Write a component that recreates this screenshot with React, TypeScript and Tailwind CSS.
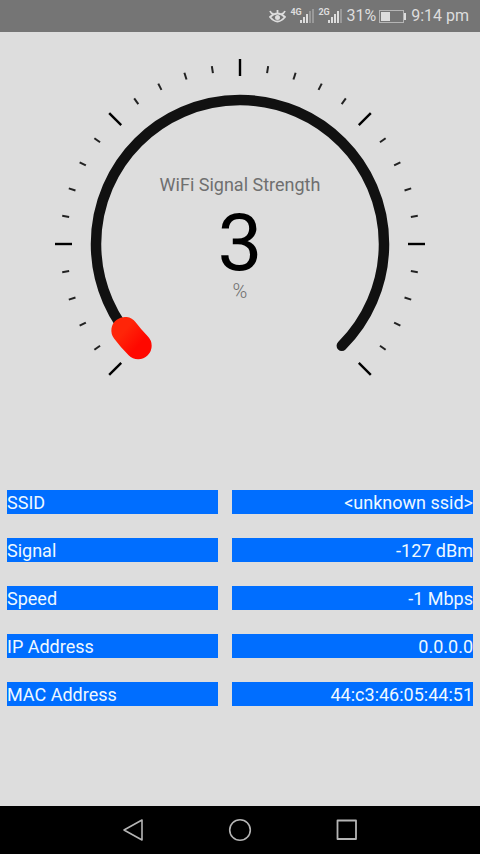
const CENTER = 186;
const RADIUS = 144;
const START = 135;
const SWEEP = 270;
const TICKS = 30;

const network = [
  { label: "SSID", value: "<unknown ssid>" },
  { label: "Signal", value: "-127 dBm" },
  { label: "Speed", value: "-1 Mbps" },
  { label: "IP Address", value: "0.0.0.0" },
  { label: "MAC Address", value: "44:c3:46:05:44:51" },
];

const polar = (degrees: number, radius: number) => {
  const radians = (degrees * Math.PI) / 180;
  return { x: CENTER + radius * Math.cos(radians), y: CENTER + radius * Math.sin(radians) };
};

const arc = (from: number, to: number) => {
  const a = polar(from, RADIUS);
  const b = polar(to, RADIUS);
  return `M${a.x} ${a.y}A${RADIUS} ${RADIUS} 0 ${to - from > 180 ? 1 : 0} 1 ${b.x} ${b.y}`;
};

export default function App() {
  return (
    <div className="flex min-h-screen flex-col bg-[#dddddd] font-[Roboto,sans-serif]">
      <StatusBar />
      <main className="flex grow flex-col">
        <Gauge label="WiFi Signal Strength" value={3} unit="%" />
        <dl className="mt-28 flex flex-col gap-6 px-[7px]">
          {network.map(({ label, value }) => (
            <div className="grid grid-cols-[211fr_241fr] gap-[14px] text-lg/[22px] text-[#eef8ff]" key={label}>
              <dt className="bg-[#006eff] pt-[2px]">{label}</dt>
              <dd className="bg-[#006eff] pt-[2px] text-right">{value}</dd>
            </div>
          ))}
        </dl>
      </main>
      <NavigationBar />
    </div>
  );
}

const StatusBar = () => (
  <header className="flex h-8 items-center justify-end bg-[#757575] pr-[11px] text-base text-[#dddddd]">
    <svg className="mr-1 h-4 w-[17px]" viewBox="0 0 17 16" fill="none" stroke="currentColor" strokeWidth="1.8" aria-hidden="true">
      <path d="M1 9Q8.500 2 16 9Q8.500 18 1 9ZM1 3Q2 5.500 4.500 6M16 3Q15 5.500 12.500 6M8.500 2V5" />
      <circle cx="8.500" cy="9.500" r="2.500" fill="currentColor" stroke="none" />
    </svg>
    <Signal network="4G" bars={3} />
    <Signal network="2G" bars={4} />
    <span className="mr-[3px]">31%</span>
    <svg className="mr-[5px] h-[13px] w-[27px]" viewBox="0 0 27 13" aria-hidden="true">
      <rect x=".5" y=".5" width="24" height="12" fill="none" stroke="#b5b5b5" />
      <path d="M2 2H11V11H2ZM25 3H27V10H25Z" fill="#dddddd" />
    </svg>
    <time>9:14 pm</time>
  </header>
);

const Signal = ({ network, bars }: { network: string; bars: number }) => (
  <span className="mr-[3px] flex w-[25px] items-start">
    <span className="w-[10px] font-['Liberation_Sans_Narrow',Roboto,sans-serif] text-[9px]/[8px] font-bold">{network}</span>
    <svg className="h-4 w-[15px]" viewBox="0 0 15 16" aria-hidden="true">
      {[3, 6, 9, 12, 14].map((height, i) => (
        <rect key={height} x={i * 3} y={15 - height} width="2" height={height} fill={i < bars ? "#dddddd" : "#999999"} />
      ))}
    </svg>
  </span>
);

const Gauge = ({ label, value, unit }: { label: string; value: number; unit: string }) => (
  <section className="grid justify-center pt-[26px]">
    <svg className="col-start-1 row-start-1 h-80 w-[372px]" viewBox="0 0 372 320" fill="none" aria-hidden="true">
      <defs>
        <linearGradient id="level" x1="0" y1="0" x2="1" y2="1">
          <stop offset="0" stopColor="#ff2508" />
          <stop offset="1" stopColor="#ff0800" />
        </linearGradient>
      </defs>
      {Array.from({ length: TICKS + 1 }, (_, i) => {
        const angle = START + (i * SWEEP) / TICKS;
        const major = i % 5 === 0;
        const inner = polar(angle, major ? 168 : 173);
        const outer = polar(angle, major ? 185 : 180);
        return (
          <line
            key={angle}
            x1={inner.x}
            y1={inner.y}
            x2={outer.x}
            y2={outer.y}
            stroke={major ? "#000000" : "#222222"}
            strokeWidth={major ? 2.4 : 2}
          />
        );
      })}
      <path d={arc(START, START + SWEEP)} stroke="#111111" strokeWidth="10.5" strokeLinecap="round" />
      <path
        d={arc(START, START + (SWEEP * value) / 100)}
        stroke="url(#level)"
        strokeWidth="27"
        strokeLinecap="round"
      />
    </svg>
    <div className="col-start-1 row-start-1 flex flex-col items-center pt-[115px] text-[#6f6f6f]">
      <h1 className="text-lg/6">{label}</h1>
      <p className="flex flex-col items-center pt-[10px]">
        <span className="text-[80px]/[72px] text-black">{value}</span>
        <span className="text-xl/6 font-light">{unit}</span>
      </p>
    </div>
  </section>
);

const NavigationBar = () => (
  <nav className="flex h-12 items-center justify-center gap-[83px] bg-black text-[#b5b5b5]">
    <button aria-label="Back">
      <svg className="size-6" viewBox="0 0 24 24" fill="none" stroke="currentColor" strokeWidth="1.6" strokeLinejoin="round">
        <path d="M3 12L21 2V22Z" />
      </svg>
    </button>
    <button aria-label="Home">
      <svg className="size-6" viewBox="0 0 24 24" fill="none" stroke="currentColor" strokeWidth="1.6">
        <circle cx="12" cy="12" r="10.300" />
      </svg>
    </button>
    <button aria-label="Recent apps">
      <svg className="size-6" viewBox="0 0 24 24" fill="none" stroke="currentColor" strokeWidth="1.8" strokeLinejoin="round">
        <rect x="2.500" y="2.500" width="18.500" height="18.500" />
      </svg>
    </button>
  </nav>
);
